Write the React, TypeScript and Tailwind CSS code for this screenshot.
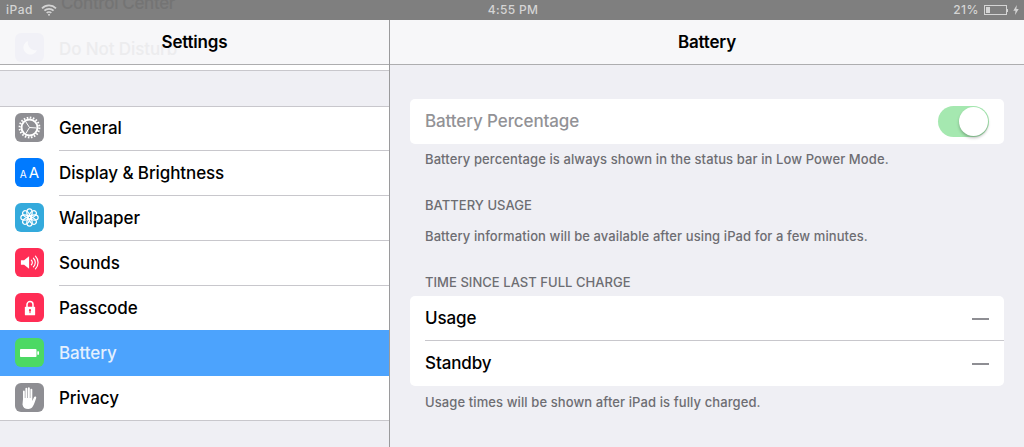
import type { ReactNode } from "react";

function Tile({ bg, children }: { bg: string; children: ReactNode }) {
  return <div className={`w-[29px] h-[29px] rounded-[6px] flex items-center justify-center shrink-0 ${bg}`}>{children}</div>;
}

const Gear = () => (
  <svg width="23" height="23" viewBox="0 0 23 23" fill="none" stroke="white">
    <circle cx="11.500" cy="11.500" r="8" strokeWidth="2" />
    <circle cx="11.500" cy="11.500" r="9.900" strokeWidth="2" strokeDasharray="1.600 1.510" />
    <path d="M11.500 11.500L7.600 5.500M11.500 11.500L18.500 12M11.500 11.500L7.800 17.500" strokeWidth="1" />
  </svg>
);

const Flower = () => (
  <svg width="21" height="21" viewBox="0 0 25 25" fill="none" stroke="white" strokeWidth="1.500">
    {[0, 45, 90, 135, 180, 225, 270, 315].map((a) => (
      <ellipse key={a} cx="12.5" cy="6.6" rx="3.2" ry="4.4" transform={`rotate(${a} 12.5 12.5)`} />
    ))}
    <circle cx="12.5" cy="12.5" r="2.6" />
  </svg>
);

const Speaker = () => (
  <svg width="20" height="17" viewBox="0 0 22 18" fill="none">
    <path d="M1 6.5h3.5L10 2v14l-5.500-4.500H1z" fill="white" />
    <path d="M12.500 6.500a3.500 3.500 0 0 1 0 5M14.800 4.300a6.500 6.500 0 0 1 0 9.400M17 2a10 10 0 0 1 0 14" stroke="white" strokeWidth="1.300" strokeLinecap="round" />
  </svg>
);

const Lock = () => (
  <svg width="12" height="16" viewBox="0 0 14 18">
    <path d="M3.500 8V5a3.500 3.500 0 0 1 7 0v3" fill="none" stroke="white" strokeWidth="1.800" />
    <rect x="1" y="7.500" width="12" height="10" rx="1" fill="white" />
    <circle cx="7" cy="11.500" r="1.300" fill="#ff2d55" />
    <rect x="6.400" y="11.500" width="1.200" height="3.500" fill="#ff2d55" />
  </svg>
);

const BatteryGlyph = () => (
  <svg width="19" height="8" viewBox="0 0 19 8" fill="white">
    <rect x="0" y="0" width="16.500" height="8" rx="0.800" />
    <rect x="17.300" y="2.300" width="1.700" height="3.400" rx="0.500" />
  </svg>
);

const Hand = () => (
  <svg width="20" height="24" viewBox="2 0 20 24" fill="white">
    <path d="M5 5.500a.9.900 0 0 1 1.800 0V12h.6V2.800a.95.950 0 0 1 1.900 0V12h.6V2.200a.95.950 0 0 1 1.900 0V12h.6V3.600a.95.950 0 0 1 1.900 0V15l1.700-3.800c.6-1.300 2.700-.8 2.200.8-.8 2.500-2 6-3.300 8.300-1 1.700-2.400 2.700-4.700 2.700-3.300 0-5.200-1.400-5.700-4.500L5 13z" />
  </svg>
);

// rows aren't all one height: the selected row overlaps the separator above it
const rows = [
  { label: "General", bg: "bg-[#8e8e93]", icon: <Gear />, row: "h-[44px] pt-0", tile: "pt-[6px]", text: "border-b border-[#c8c7cc]" },
  {
    label: "Display & Brightness",
    bg: "bg-[#007aff]",
    icon: (
      <span className="flex items-baseline gap-[2px] text-white font-normal leading-none">
        <span className="text-[10px]">A</span>
        <span className="text-[15px]">A</span>
      </span>
    ),
    row: "h-[45px]",
    tile: "pt-[7px]",
    text: "border-b border-[#c8c7cc] pt-[1px]",
  },
  { label: "Wallpaper", bg: "bg-[#34aadc]", icon: <Flower />, row: "h-[45px]", tile: "pt-[7px]", text: "border-b border-[#c8c7cc] pt-[1px]" },
  { label: "Sounds", bg: "bg-[#ff2d55]", icon: <Speaker />, row: "h-[45px]", tile: "pt-[7px]", text: "border-b border-[#c8c7cc] pt-[1px]" },
  { label: "Passcode", bg: "bg-[#ff2d55]", icon: <Lock />, row: "h-[45px]", tile: "pt-[7px]", text: "" },
  { label: "Battery", bg: "bg-[#4cd964]", icon: <BatteryGlyph />, row: "h-[46px] -mt-[1px] relative bg-[#4ca3fd]", tile: "pt-[8px]", text: "pt-[1px] text-[#e4f0fe]" },
  { label: "Privacy", bg: "bg-[#8e8e93]", icon: <Hand />, row: "h-[44px]", tile: "pt-[7px]", text: "pt-[1px]" },
];

export default function App() {
  return (
    <div className="w-[1024px] h-[447px] overflow-hidden flex flex-col bg-[#efeff4] text-black font-['Inter',sans-serif]">
      {/* Status bar */}
      <div className="h-5 shrink-0 bg-[#7f7f7f] relative grid grid-cols-3 items-center px-[6px] text-[12px] font-medium text-[#d4d4d4]">
        <span className="absolute left-[61px] -top-[9px] text-[17px] font-medium text-[#747474] tracking-[-0.35px] whitespace-nowrap">Control Center</span>
        <div className="relative flex items-center gap-[8px]">
          <span className="tracking-[0.5px]">iPad</span>
          <svg width="16" height="12" viewBox="0 0 16 12" fill="none" stroke="#d4d4d4" strokeWidth="1.700">
            <path d="M1 4.300a10 10 0 0 1 14 0M3.400 6.700a6.500 6.500 0 0 1 9.200 0M5.700 9a3.200 3.200 0 0 1 4.600 0" />
            <circle cx="8" cy="10.800" r="1" fill="#d4d4d4" stroke="none" />
          </svg>
        </div>
        <span className="text-center tracking-[0.3px] pl-[2px]">4:55 PM</span>
        <div className="flex items-center justify-end gap-[5px] -mr-[1px]">
          <span className="tracking-[0.5px]">21%</span>
          <div className="flex items-center">
            <div className="w-[23px] h-[10px] border border-[#d4d4d4] p-[1px]">
              <div className="w-[4px] h-full bg-[#d4d4d4]" />
            </div>
            <div className="w-[1px] h-[3px] bg-[#d4d4d4]" />
          </div>
          <svg width="6" height="10" viewBox="0 0 6 10" fill="#d4d4d4">
            <path d="M3.800 0 .3 5.700h2.200L2 10l3.700-6H3.400z" />
          </svg>
        </div>
      </div>

      <div className="flex-1 flex min-h-0">
        {/* Master column */}
        <aside className="w-[390px] shrink-0 border-r border-[#9a9a9c] flex flex-col">
          <div className="h-[45px] shrink-0 relative bg-[#f7f7f9] border-b border-[#adadaf] flex items-center justify-center">
            <div className="absolute left-[15px] top-[13px] w-[29px] h-[29px] rounded-[6px] bg-[#f1f1f7] flex items-center justify-center">
              <svg width="16" height="16" viewBox="0 0 16 16" fill="#f9f9fb">
                <path d="M6 1a7 7 0 1 0 9 9A7.500 7.500 0 0 1 6 1z" />
              </svg>
            </div>
            <span className="absolute left-[59px] top-[17px] text-[17px] font-medium text-[#ececee] tracking-[-0.1px]">Do Not Disturb</span>
            <span className="relative text-[17px] font-semibold tracking-[-0.2px] pt-[1px]">Settings</span>
          </div>
          <div className="h-[6px] shrink-0 bg-white border-b border-[#c8c7cc]" />
          <div className="h-[36px] shrink-0 border-b border-[#c8c7cc]" />
          <div className="bg-white border-b border-[#c8c7cc]">
            {rows.map((row) => (
              <div key={row.label} className={`pl-[15px] flex items-stretch gap-[15px] ${row.row}`}>
                <div className={row.tile}>
                  <Tile bg={row.bg}>{row.icon}</Tile>
                </div>
                <div className={`flex-1 flex items-center text-[17px] font-medium tracking-[-0.1px] ${row.text}`}>
                  {row.label}
                </div>
              </div>
            ))}
          </div>
        </aside>

        {/* Detail column */}
        <main className="flex-1 flex flex-col min-w-0">
          <div className="h-[45px] shrink-0 bg-[#f7f7f9] border-b border-[#adadaf] flex items-center justify-center">
            <span className="text-[17px] font-semibold tracking-[-0.2px] pt-[1px]">Battery</span>
          </div>
          <div className="px-5 pt-[34px]">
            <div className="h-[45px] bg-white rounded-[5px] pl-[15px] pr-[15px] flex items-center justify-between">
              <span className="text-[17px] font-medium tracking-[-0.1px] text-[#929296] pt-[1px]">Battery Percentage</span>
              <div className="w-[51px] h-[31px] rounded-full bg-[#a5e8b0] relative">
                <div className="absolute right-[1px] top-[1px] w-[29px] h-[29px] rounded-full bg-white shadow-[0_2px_3px_rgba(0,0,0,0.25)]" />
              </div>
            </div>
            <p className="px-[15px] mt-[7px] text-[13px] leading-4 font-medium text-[#6d6d72] tracking-[0.1px]">Battery percentage is always shown in the status bar in Low Power Mode.</p>
            <p className="px-[15px] mt-[30px] text-[13px] leading-4 font-medium text-[#6d6d72] tracking-[0.05px]">BATTERY USAGE</p>
            <p className="px-[15px] mt-[15px] text-[13px] leading-4 font-medium text-[#6d6d72] tracking-[0.1px]">Battery information will be available after using iPad for a few minutes.</p>
            <p className="px-[15px] mt-[30px] text-[13px] leading-4 font-medium text-[#6d6d72] tracking-[0.04px]">TIME SINCE LAST FULL CHARGE</p>
            <div className="mt-[6px] bg-white rounded-[5px]">
              <div className="ml-[15px] h-[45px] pr-[15px] pt-[2px] flex items-center justify-between border-b border-[#c8c7cc] text-[17px] font-medium tracking-[-0.1px]">
                <span>Usage</span>
                <div className="w-[17px] h-[2px] bg-[#8e8e93]" />
              </div>
              <div className="ml-[15px] h-[45px] pr-[15px] pt-[1px] flex items-center justify-between text-[17px] font-medium tracking-[-0.1px]">
                <span>Standby</span>
                <div className="w-[17px] h-[2px] bg-[#8e8e93]" />
              </div>
            </div>
            <p className="px-[15px] mt-[8px] text-[13px] leading-4 font-medium text-[#6d6d72] tracking-[0.1px]">Usage times will be shown after iPad is fully charged.</p>
          </div>
        </main>
      </div>
    </div>
  );
}
